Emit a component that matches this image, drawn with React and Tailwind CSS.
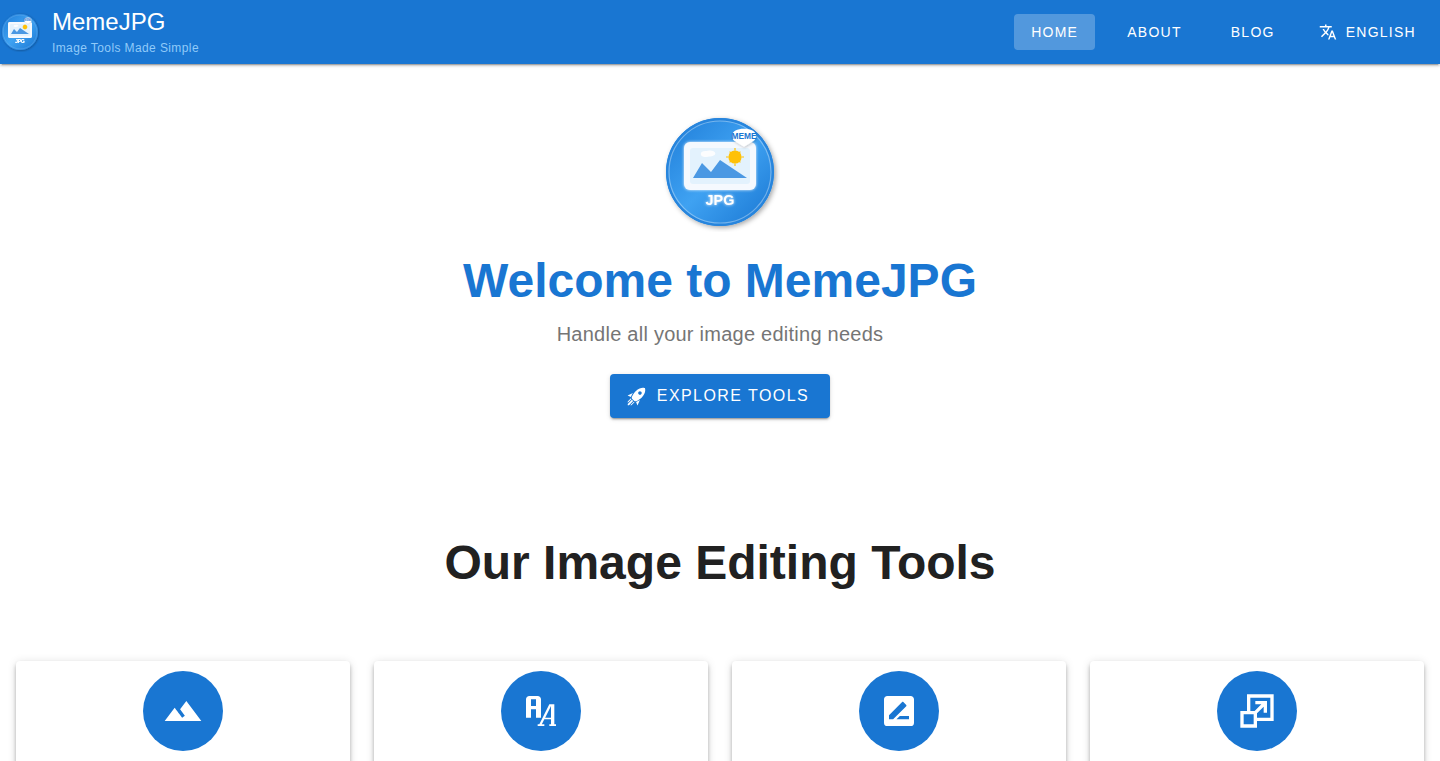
import React, { useId } from "react";

const ICONS = {
    translate: "M12.87,15.07L10.33,12.56L10.36,12.53C12.1,10.59 13.34,8.36 14.07,6H17V4H10V2H8V4H1V6H12.17C11.5,7.92 10.44,9.75 9,11.35C8.07,10.32 7.3,9.19 6.69,8H4.69C5.42,9.63 6.42,11.17 7.67,12.56L2.58,17.58L4,19L9,14L12.11,17.11L12.87,15.07M18.5,10H16.5L12,22H14L15.12,19H19.87L21,22H23L18.5,10M15.88,17L17.5,12.67L19.12,17H15.88Z",
    rocket: "M13.13 22.19L11.5 18.36C13.07 17.78 14.54 17 15.9 16.09L13.13 22.19M5.64 12.5L1.81 10.87L7.91 8.1C7 9.46 6.22 10.93 5.64 12.5M21.61 2.39C21.61 2.39 16.66 .269 11 5.93C8.81 8.12 7.5 10.53 6.65 12.64C6.37 13.39 6.56 14.21 7.11 14.77L9.24 16.89C9.79 17.45 10.61 17.63 11.36 17.35C13.5 16.53 15.88 15.19 18.07 13C23.73 7.34 21.61 2.39 21.61 2.39M14.54 9.46C13.76 8.68 13.76 7.41 14.54 6.63S16.59 5.85 17.37 6.63C18.14 7.41 18.15 8.68 17.37 9.46C16.59 10.24 15.32 10.24 14.54 9.46M6.24 22L9.88 18.36C9.54 18.27 9.21 18.12 8.91 17.91L4.83 22H6.24M2 22H3.41L8.18 17.24L6.76 15.83L2 20.59V22M2 19.17L6.09 15.09C5.88 14.79 5.73 14.47 5.64 14.12L2 17.76V19.17Z",
    landscape: "M14,6L10.25,11L13.1,14.8L11.5,16C9.81,13.75 7,10 7,10L1,18H23L14,6Z",
    font: "M17,8H20V20H21V21H17V20H18V17H14L12.5,20H14V21H10V20H11L17,8M18,9L14.5,16H18V9M5,3H10C11.11,3 12,3.89 12,5V16H9V11H6V16H3V5C3,3.89 3.89,3 5,3M6,5V9H9V5H6Z",
    rename: "M18,17H10.5L12.5,15H18M6,17V14.5L13.88,6.65C14.07,6.45 14.39,6.45 14.59,6.65L16.35,8.41C16.55,8.61 16.55,8.92 16.35,9.12L8.47,17M19,3H5C3.89,3 3,3.89 3,5V19A2,2 0 0,0 5,21H19A2,2 0 0,0 21,19V5C21,3.89 20.1,3 19,3Z",
    resize: "M10.59,12L14.59,8H11V6H18V13H16V9.41L12,13.41V16H20V4H8V12H10.59M22,2V18H12V22H2V12H6V2H22M10,14H4V20H10V14Z",
};

const NAV = [
    { label: "HOME", active: true },
    { label: "ABOUT" },
    { label: "BLOG" },
];

const TOOLS = ["landscape", "font", "rename", "resize"];

function Icon({ name, className }) {
    return (
        <svg viewBox="0 0 24 24" fill="currentColor" aria-hidden="true" className={className}>
            <path d={ICONS[name]} />
        </svg>
    );
}

function Logo({ className }) {
    const id = useId();

    return (
        <svg viewBox="0 0 200 200" role="img" aria-label="MemeJPG logo" className={className}>
            <defs>
                <linearGradient id={`${id}face`} x1="0" y1="0" x2="1" y2="1">
                    <stop offset="0%" stopColor="#1f7dd8" />
                    <stop offset="50%" stopColor="#3fa2f2" />
                    <stop offset="100%" stopColor="#1976d2" />
                </linearGradient>
                <filter id={`${id}shadow`} x="-20%" y="-20%" width="140%" height="140%">
                    <feDropShadow dx="3" dy="3" stdDeviation="4" floodColor="#000" floodOpacity="0.35" />
                </filter>
                <filter id={`${id}soft`} x="-30%" y="-30%" width="160%" height="160%">
                    <feDropShadow dx="1" dy="2" stdDeviation="2" floodColor="#000" floodOpacity="0.2" />
                </filter>
                <filter id={`${id}glow`} x="-30%" y="-30%" width="160%" height="160%">
                    <feDropShadow dx="0" dy="0" stdDeviation="3" floodColor="#fff" floodOpacity="0.9" />
                </filter>
            </defs>
            <circle cx="100" cy="100" r="90" fill="#2b87dd" filter={`url(#${id}shadow)`} />
            <circle cx="100" cy="100" r="88" fill={`url(#${id}face)`} stroke="#2785dd" strokeWidth="4" />
            <circle cx="100" cy="100" r="85" fill="none" stroke="#fff" strokeOpacity="0.35" strokeWidth="2" />

            {/* Picture frame */}
            <rect x="40" y="50" width="120" height="80" rx="10" fill="#f5f9fe" filter={`url(#${id}glow)`} />
            <rect x="50" y="60" width="100" height="60" rx="5" fill="#e3f2fd" />
            <path d="M55 110L70 85L85 100L100 80L145 110Z" fill="#4a98e3" />
            <g fill="#fff" opacity="0.9">
                <ellipse cx="76" cy="70" rx="8" ry="5" />
                <ellipse cx="83" cy="69" rx="9" ry="5" />
            </g>
            <path
                d="M125 60V64M125 86V90M110 75H114M136 75H140M116 66L118 68M132 82L134 84M134 66L132 68M118 82L116 84"
                stroke="#ffc107"
                strokeWidth="2"
            />
            <circle cx="125" cy="75" r="11" fill="#ffc107" />

            {/* Speech bubble */}
            <path
                d="M120 40C120 32 129 28 140 28S160 32 160 40C160 45 157 48 153 50L140 58L127 50C123 48 120 45 120 40Z"
                fill="#fff"
                filter={`url(#${id}soft)`}
            />
            <text x="140" y="45" textAnchor="middle" fontSize="14" fontWeight="bold" fill="#1976d2">MEME</text>
            <text x="100" y="155" textAnchor="middle" fontSize="24" fontWeight="bold" fill="#fff" filter={`url(#${id}glow)`}>JPG</text>
        </svg>
    );
}

export default function App() {
    return (
        <div className="h-screen overflow-hidden bg-white font-['Liberation_Sans',Arial,sans-serif] text-[#212121]">
            <header className="relative flex h-16 items-center justify-between bg-[#1976d2] pr-2 text-white shadow-[0_3px_1px_-2px_rgba(0,0,0,0.2),0_2px_2px_0_rgba(0,0,0,0.14),0_1px_5px_0_rgba(0,0,0,0.12)]">
                <a href="#home" className="flex items-center gap-3">
                    <Logo className="size-10" />
                    <span className="flex flex-col">
                        <span className="text-2xl leading-8">MemeJPG</span>
                        <span className="text-xs leading-5 tracking-[0.033em] text-[#90caf9]">Image Tools Made Simple</span>
                    </span>
                </a>
                <nav className="flex items-center gap-[15px] text-sm tracking-[0.09em]">
                    {NAV.map(({ label, active }) => (
                        <a
                            key={label}
                            href={`#${label.toLowerCase()}`}
                            className={`flex h-9 items-center rounded px-[17px] ${active ? "bg-white/25" : ""}`}
                        >
                            {label}
                        </a>
                    ))}
                    <button type="button" className="flex h-9 items-center gap-[9px] rounded pr-4 pl-3 tracking-[0.09em]">
                        <Icon name="translate" className="size-[18px]" />
                        ENGLISH
                    </button>
                </nav>
            </header>

            <main>
                <section className="flex flex-col items-center px-4 pt-12 pb-12 text-center">
                    <Logo className="size-[120px]" />
                    <h1 className="mt-6 text-5xl leading-[50px] font-bold text-[#1976d2]">Welcome to MemeJPG</h1>
                    <p className="mt-3 text-xl leading-8 tracking-[0.0125em] text-[#757575]">Handle all your image editing needs</p>
                    <button
                        type="button"
                        className="mt-6 flex h-11 items-center gap-[10px] rounded bg-[#1976d2] pr-[21px] pl-4 tracking-[0.09em] text-white shadow-[0_3px_1px_-2px_rgba(0,0,0,0.2),0_2px_2px_0_rgba(0,0,0,0.14),0_1px_5px_0_rgba(0,0,0,0.12)]"
                    >
                        <Icon name="rocket" className="size-[21px]" />
                        EXPLORE TOOLS
                    </button>
                </section>

                <section className="px-4 pt-[72px]">
                    <h2 className="text-center text-5xl leading-[50px] font-bold">Our Image Editing Tools</h2>
                    <div className="mt-[73px] grid grid-cols-4 gap-6">
                        {TOOLS.map((name) => (
                            <article
                                key={name}
                                className="flex justify-center rounded bg-white pt-[10px] pb-16 shadow-[0_2px_4px_-1px_rgba(0,0,0,0.2),0_4px_5px_0_rgba(0,0,0,0.14),0_1px_10px_0_rgba(0,0,0,0.12)]"
                            >
                                <span className="flex size-20 items-center justify-center rounded-full bg-[#1976d2] text-white">
                                    <Icon name={name} className="size-10" />
                                </span>
                            </article>
                        ))}
                    </div>
                </section>
            </main>
        </div>
    );
}
